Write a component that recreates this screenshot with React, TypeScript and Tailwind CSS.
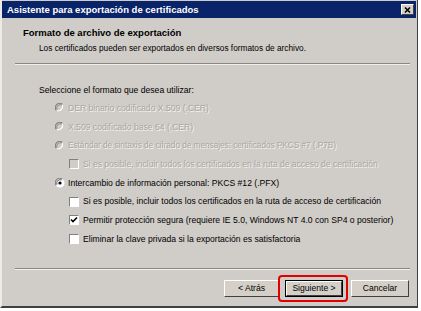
import React from "react";

const FONT = { fontFamily: '"Liberation Sans", Arial, sans-serif' };

function Radio({ checked, disabled }: { checked?: boolean; disabled?: boolean }) {
  return (
    <svg width="10" height="10" viewBox="0 0 10 10" className="shrink-0">
      <circle cx="5" cy="5" r="4.5" fill={disabled ? "#d0ccc8" : "#ffffff"} />
      <path d="M1.2 7.2 A4.3 4.3 0 0 1 7.2 1.2" stroke="#808080" strokeWidth="1.1" fill="none" />
      <path d="M2 6.5 A3.4 3.4 0 0 1 6.5 2" stroke={disabled ? "#808080" : "#404040"} strokeWidth="0.9" fill="none" />
      <path d="M7.4 2.2 A4.3 4.3 0 0 1 2.2 7.6" stroke="#ffffff" strokeWidth="1.1" fill="none" />
      {checked && <circle cx="5" cy="5" r="1.6" fill="#000" />}
    </svg>
  );
}

function Check({ checked, disabled }: { checked?: boolean; disabled?: boolean }) {
  return (
    <span
      className={`shrink-0 w-[10px] h-[10px] border border-t-[#808080] border-l-[#808080] border-b-white border-r-white flex items-center justify-center ${
        disabled ? "bg-[#d0ccc8]" : "bg-white"
      }`}
    >
      {checked && (
        <svg width="8" height="8" viewBox="0 0 8 8">
          <path d="M1 3.5 L3 5.5 L7 1.5" stroke="#000" strokeWidth="1.6" fill="none" />
        </svg>
      )}
    </span>
  );
}

const dis = "text-[#aaa6a2] [text-shadow:1px_1px_0_#f4f4f0]";

function Btn({ label, def }: { label: string; def?: boolean }) {
  return (
    <div
      className={`h-[17px] flex items-center justify-center bg-[#d4d0c8] ${
        def ? "border border-black" : ""
      }`}
    >
      <div className="w-full h-full border border-t-white border-l-white border-r-[#404040] border-b-[#404040] flex items-center justify-center">
        <span className="text-[8.6px] text-black leading-none">{label}</span>
      </div>
    </div>
  );
}

export default function App() {
  const rowH = "h-[18.7px] flex items-center";
  return (
    <div className="w-[421px] h-[311px] bg-white overflow-hidden" style={FONT}>
      <div className="relative w-[418px] h-[308px] bg-[#d0ccc8] border-l-2 border-l-[#ecebe6] border-r border-r-[#404040] border-b-2 border-b-[#404040] flex flex-col">
        {/* title bar */}
        <div className="mt-[1px] mr-[1px] h-[17px] bg-[#0a246a] flex items-center justify-between pl-[5px] pr-[2px]">
          <span className="text-white font-bold text-[9.5px] leading-none">
            Asistente para exportación de certificados
          </span>
          <div className="w-[13px] h-[11px] bg-[#d4d0c8] border border-t-white border-l-white border-r-[#404040] border-b-[#404040] flex items-center justify-center">
            <svg width="7" height="6" viewBox="0 0 7 6">
              <path d="M1 0.5 L6 5.5 M6 0.5 L1 5.5" stroke="#000" strokeWidth="1.5" />
            </svg>
          </div>
        </div>

        {/* header */}
        <div className="mt-[9px] pl-[21px] h-[12px] flex items-center">
          <span className="font-bold text-[9.5px] text-black leading-none">
            Formato de archivo de exportación
          </span>
        </div>
        <div className="mt-[3px] pl-[37px] h-[12px] flex items-center">
          <span className="text-[8.3px] text-black leading-none">
            Los certificados pueden ser exportados en diversos formatos de archivo.
          </span>
        </div>
        <div className="mt-[9px] ml-[13px] w-[395px] border-t border-t-[#8a8784] border-b border-b-[#f0efea]" />

        {/* body */}
        <div className="mt-[19px] pl-[37px] h-[12px] flex items-center">
          <span className="text-[8.6px] text-black leading-none">
            Seleccione el formato que desea utilizar:
          </span>
        </div>

        <div className="mt-[3px] flex flex-col text-[8.6px] leading-none">
          <div className={`${rowH} pl-[53px] gap-[3px]`}>
            <Radio disabled />
            <span className={dis}>DER binario codificado X.509 (.CER)</span>
          </div>
          <div className={`${rowH} pl-[53px] gap-[3px]`}>
            <Radio disabled />
            <span className={dis}>X.509 codificado base 64 (.CER)</span>
          </div>
          <div className={`${rowH} pl-[53px] gap-[3px]`}>
            <Radio disabled />
            <span className={`${dis} text-[8.2px]`}>
              Estándar de sintaxis de cifrado de mensajes: certificados PKCS #7 (.P7B)
            </span>
          </div>
          <div className={`${rowH} pl-[67px] gap-[4px]`}>
            <Check disabled />
            <span className={`${dis} text-[8.5px]`}>
              Si es posible, incluir todos los certificados en la ruta de acceso de certificación
            </span>
          </div>
          <div className={`${rowH} pl-[53px] gap-[3px]`}>
            <Radio checked />
            <span className="text-black">
              Intercambio de información personal: PKCS #12 (.PFX)
            </span>
          </div>
          <div className={`${rowH} pl-[67px] gap-[4px]`}>
            <Check />
            <span className="text-black">
              Si es posible, incluir todos los certificados en la ruta de acceso de certificación
            </span>
          </div>
          <div className={`${rowH} pl-[67px] gap-[4px]`}>
            <Check checked />
            <span className="text-black">
              Permitir protección segura (requiere IE 5.0, Windows NT 4.0 con SP4 o posterior)
            </span>
          </div>
          <div className={`${rowH} pl-[67px] gap-[4px]`}>
            <Check />
            <span className="text-black">
              Eliminar la clave privada si la exportación es satisfactoria
            </span>
          </div>
        </div>

        <div className="mt-[19px] ml-[13px] w-[395px] border-t border-t-[#8a8784] border-b border-b-[#f0efea]" />

        {/* buttons */}
        <div className="mt-[10px] flex pl-[222px]">
          <div className="w-[55px]">
            <Btn label="< Atrás" />
          </div>
          <div className="ml-[6px] w-[58px]">
            <Btn label="Siguiente >" def />
          </div>
          <div className="ml-[8px] w-[58px]">
            <Btn label="Cancelar" />
          </div>
        </div>

        {/* red annotation */}
        <div className="absolute left-[276px] top-[275px] w-[70px] h-[27px] border-2 border-[#e00000] rounded-[4px]" />
      </div>
    </div>
  );
}
